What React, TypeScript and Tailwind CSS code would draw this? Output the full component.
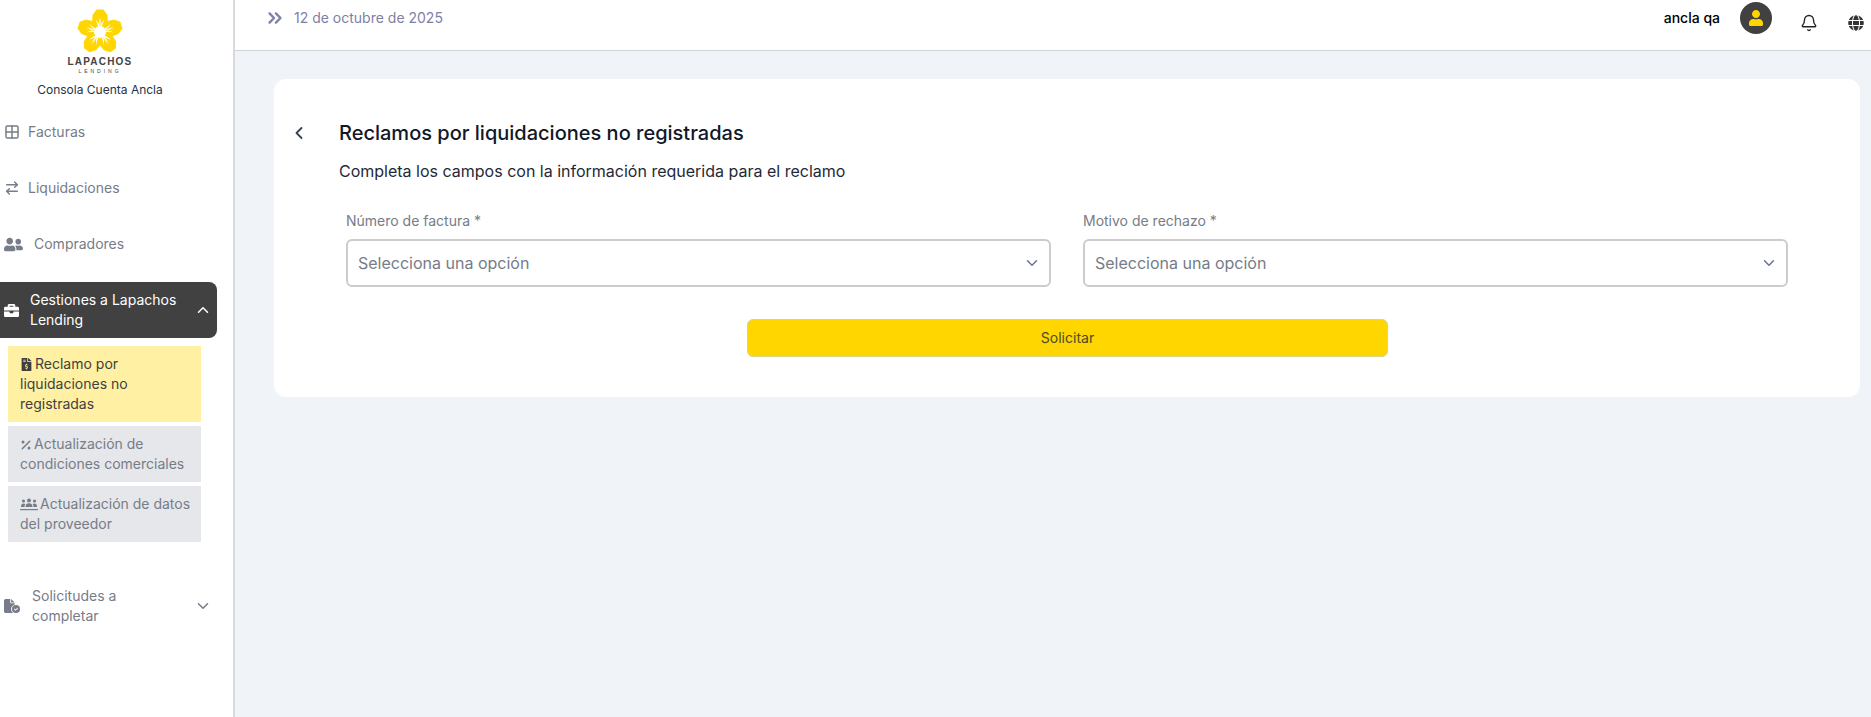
import type { ReactNode } from "react";
import {
  ArrowRightLeft,
  Bell,
  ChevronDown,
  ChevronLeft,
  ChevronUp,
  ChevronsRight,
  Grid2x2,
} from "lucide-react";
import { FaBriefcase, FaFileInvoiceDollar, FaGlobe, FaUser, FaUserFriends } from "react-icons/fa";
import { FaFileCircleCheck, FaPercent } from "react-icons/fa6";

function LapachosFlower() {
  const angles = [0, 72, 144, 216, 288];
  return (
    <svg width="46" height="44" viewBox="-23 -23 46 44">
      {angles.map((a) => (
        <g key={a} transform={`rotate(${a})`}>
          <path d="M0 -2 L-8 -9 L-7.5 -17 L-3.5 -22.5 L3.5 -22.5 L7.5 -17 L8 -9 Z" fill="#ffd600" />
          <path d="M0 -1 L-1.2 -15 L0 -10 L1.2 -15 Z" fill="#fff" />
          <path d="M0 -1 L-4.5 -13 L-1 -8 Z" fill="#fff" />
          <path d="M0 -1 L4.5 -13 L1 -8 Z" fill="#fff" />
        </g>
      ))}
      <circle r="6" fill="#fff" />
    </svg>
  );
}

function GroupIcon() {
  return (
    <svg width="18" height="13" viewBox="0 0 18 13" fill="currentColor">
      <circle cx="9" cy="2.5" r="2" />
      <circle cx="3.5" cy="3" r="1.6" />
      <circle cx="14.5" cy="3" r="1.6" />
      <path d="M5.5 9 C5.5 6 7 5.2 9 5.2 C11 5.2 12.5 6 12.5 9 Z" />
      <path d="M1 9 C1 6.6 2 5.6 3.5 5.6 C4.2 5.6 4.8 5.8 5.2 6.2 C4.7 7 4.5 8 4.5 9 Z" />
      <path d="M17 9 C17 6.6 16 5.6 14.5 5.6 C13.8 5.6 13.2 5.8 12.8 6.2 C13.3 7 13.5 8 13.5 9 Z" />
      <rect x="0" y="11" width="18" height="1.2" />
    </svg>
  );
}

function NavItem({ icon, label, gap }: { icon: ReactNode; label: string; gap: string }) {
  return (
    <div className={`flex h-14 items-center pl-1 text-sm text-[#767c88] ${gap}`}>
      {icon}
      <span>{label}</span>
    </div>
  );
}

function SubItem({
  icon,
  lines,
  active,
  height,
}: {
  icon: ReactNode;
  lines: string;
  active?: boolean;
  height: string;
}) {
  return (
    <div
      className={`${height} pt-2 pr-2 pl-3 text-sm leading-5 ${
        active ? "bg-[#fff0a3] text-[#3f3f3f]" : "bg-[#e5e7eb] text-[#767c88]"
      }`}
    >
      <span className="mr-[2px] inline-block align-[-2px]">{icon}</span>
      {lines}
    </div>
  );
}

function SelectField({ label }: { label: string }) {
  return (
    <div className="flex-1">
      <div className="mb-[7px] h-[23px] text-sm leading-[23px] text-[#767c88]">{label}</div>
      <div className="flex h-12 items-center justify-between rounded-md border-2 border-[#cccccc] bg-white pl-[10px] pr-2">
        <span className="text-base text-[#767c88]">Selecciona una opción</span>
        <ChevronDown size={18} strokeWidth={2} className="text-[#6b7296]" />
      </div>
    </div>
  );
}

export default function App() {
  return (
    <div className="flex h-[717px] w-[1871px] overflow-hidden bg-white font-['Inter',sans-serif]">
      <aside className="w-[235px] shrink-0 border-r-2 border-[#dadadd] bg-white">
        <div className="flex h-[104px] w-[200px] flex-col items-center pt-[9px]">
          <LapachosFlower />
          <div className="mt-[3px] font-['Liberation_Sans',sans-serif] text-[10px] leading-[11px] font-bold tracking-[0.12em] text-[#444444]">
            LAPACHOS
          </div>
          <div className="font-['Liberation_Sans',sans-serif] text-[5px] leading-[8px] tracking-[0.6em] text-[#444444]">
            LENDING
          </div>
          <div className="mt-[6px] text-xs leading-[18px] text-[#273244]">Consola Cuenta Ancla</div>
        </div>

        <NavItem icon={<Grid2x2 size={16} strokeWidth={2.2} />} label="Facturas" gap="gap-[8px]" />
        <NavItem icon={<ArrowRightLeft size={16} strokeWidth={2.2} />} label="Liquidaciones" gap="gap-[8px]" />
        <NavItem icon={<FaUserFriends size={19} />} label="Compradores" gap="gap-[11px]" />

        <div className="mt-[10px] flex h-14 w-[217px] items-center rounded-r-lg bg-[#414141] pl-1 pr-[5px] text-sm leading-5 text-white">
          <FaBriefcase size={15} className="shrink-0" />
          <span className="ml-[11px] flex-1">Gestiones a Lapachos Lending</span>
          <ChevronUp size={18} strokeWidth={2} />
        </div>

        <div className="mt-2 ml-2 flex w-[193px] flex-col gap-1">
          <SubItem
            active
            height="h-[76px]"
            icon={<FaFileInvoiceDollar size={13} />}
            lines="Reclamo por liquidaciones no registradas"
          />
          <SubItem
            height="h-14"
            icon={<FaPercent size={12} />}
            lines="Actualización de condiciones comerciales"
          />
          <SubItem
            height="h-14"
            icon={<GroupIcon />}
            lines="Actualización de datos del proveedor"
          />
        </div>

        <div className="mt-9 flex h-14 w-[217px] items-center pl-1 pr-[5px] text-sm leading-5 text-[#767c88]">
          <FaFileCircleCheck size={16} className="shrink-0" />
          <span className="ml-[12px] w-[110px] flex-1">
            Solicitudes a
            <br />
            completar
          </span>
          <ChevronDown size={18} strokeWidth={2} />
        </div>
      </aside>

      <div className="flex min-w-0 flex-1 flex-col">
        <header className="flex h-[51px] shrink-0 items-start border-b-[1px] border-[#cfd3d8] bg-white pt-2 pr-[7px] pl-[29px]">
          <ChevronsRight size={22} strokeWidth={2.6} className="-mt-[1px] text-[#8080a8]" />
          <span className="ml-2 text-sm leading-5 text-[#7f80a5]">12 de octubre de 2025</span>
          <span className="ml-auto -translate-x-[1px] text-sm leading-5 font-medium text-black">ancla qa</span>
          <span className="mt-[-6px] ml-5 flex h-8 w-8 -translate-x-[1px] items-center justify-center rounded-full bg-[#414141] text-[#ffd600]">
            <FaUser size={16} />
          </span>
          <Bell size={18} strokeWidth={1.8} className="mt-[6px] ml-[27px] text-[#222222]" />
          <FaGlobe size={16} className="mt-[7px] ml-[30px] text-[#333333]" />
        </header>

        <main className="flex-1 bg-[#f0f3f8] pt-7 pr-[11px] pl-[39px]">
          <section className="h-[318px] rounded-xl bg-white pt-[40px] pr-[72px] pl-[15px]">
            <div className="flex items-center">
              <ChevronLeft size={20} strokeWidth={2.2} className="text-[#374151]" />
              <h1 className="ml-[30px] text-xl leading-7 font-medium text-[#111827]">
                Reclamos por liquidaciones no registradas
              </h1>
            </div>
            <p className="mt-3 ml-[50px] text-base leading-6 text-[#1f2937]">
              Completa los campos con la información requerida para el reclamo
            </p>
            <div className="mt-[26px] ml-[57px] flex gap-8">
              <SelectField label="Número de factura *" />
              <SelectField label="Motivo de rechazo *" />
            </div>
            <button className="mt-8 ml-[458px] block h-[38px] w-[641px] rounded-md border border-[#dcd28a] bg-[#ffd600] text-sm text-[#4b4b2a]">
              Solicitar
            </button>
          </section>
        </main>
      </div>
    </div>
  );
}
